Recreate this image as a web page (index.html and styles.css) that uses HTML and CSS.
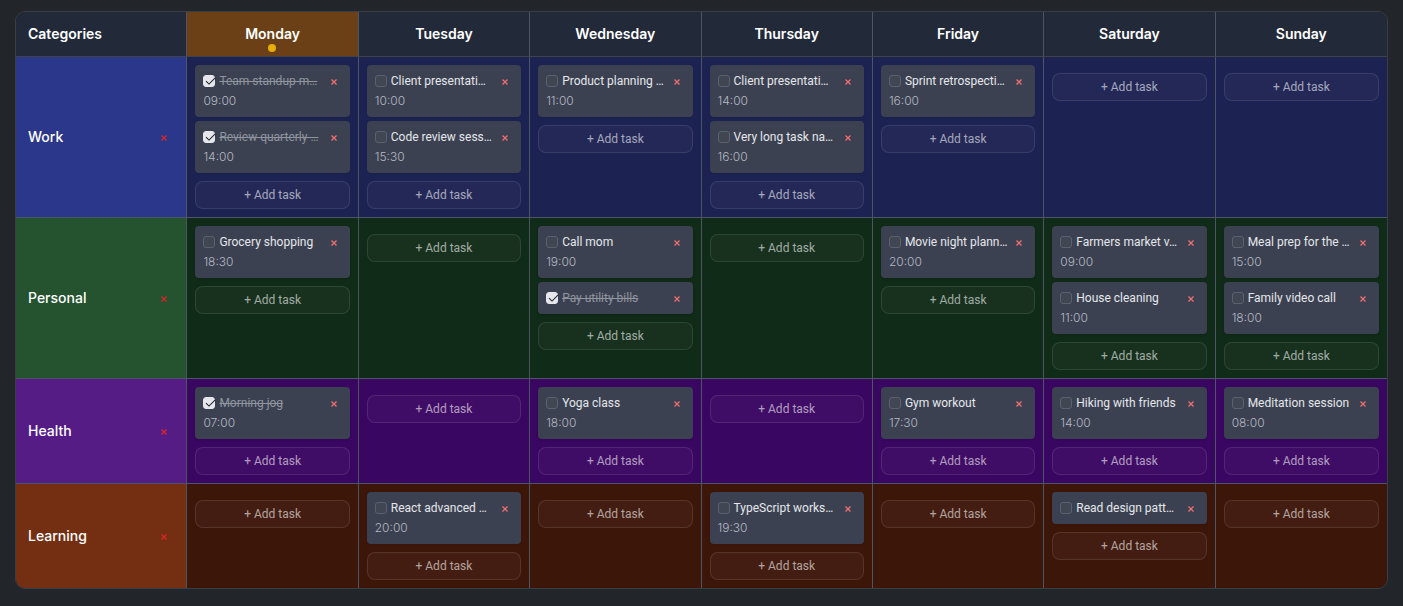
FILE: index.html
```html
<!DOCTYPE html>
<html lang="en">
<head>
<meta charset="utf-8">
<meta name="viewport" content="width=device-width, initial-scale=1">
<title>Weekly planner</title>
<link rel="stylesheet" href="styles.css">
</head>
<body>
<main class="planner">
  <table class="week">
    <thead>
      <tr id="week-head"><th class="head head-categories" scope="col">Categories</th></tr>
    </thead>
    <tbody id="week-body"></tbody>
  </table>
</main>
<script src="planner.js"></script>
</body>
</html>
```

FILE: styles.css
```css
* {
  box-sizing: border-box;
}

body {
  margin: 0;
  background: #222529;
  color: #ffffff;
  font-family: Inter, "Liberation Sans", sans-serif;
  font-size: 14px;
  line-height: 20px;
}

.planner {
  margin: 11px 15px;
  border: 1px solid #3a3f45;
  border-radius: 10px;
  overflow: hidden;
}

.week {
  width: 100%;
  table-layout: fixed;
  border-collapse: separate;
  border-spacing: 0;
}

.head,
.category,
.day {
  border-right: 1px solid #4b5563;
  border-bottom: 1px solid #4b5563;
}

.head:last-child,
.day:last-child {
  border-right: 0;
}

tbody tr:last-child > * {
  border-bottom: 0;
}

.head {
  position: relative;
  padding: 12px;
  background: #222938;
  border-bottom-color: #3c4448;
  font-weight: 600;
  text-align: center;
}

.head-categories {
  text-align: left;
}

.head-today {
  background: #6b4016;
}

.today-dot {
  position: absolute;
  bottom: 4px;
  left: 50%;
  width: 8px;
  height: 8px;
  margin-left: -5px;
  border-radius: 50%;
  background: #e7b008;
}

.category {
  padding: 0 12px;
  font-weight: 500;
  text-align: left;
  vertical-align: middle;
}

.category-row {
  display: flex;
  align-items: center;
  justify-content: space-between;
}

.day {
  padding: 8px;
  vertical-align: top;
}

.work .category { background: #2a378a; }
.work .day { background: #1c2252; }
.personal .category { background: #25532f; }
.personal .day { background: #102b17; }
.health .category { background: #551c86; }
.health .day { background: #390661; }
.learning .category { background: #742f13; }
.learning .day { background: #3d160a; }

.tasks {
  display: grid;
  grid-template-columns: minmax(0, 1fr);
  gap: 4px;
  margin: 0;
  padding: 0;
  list-style: none;
}

.task {
  padding: 8px;
  border-radius: 4px;
  background: #3b4151;
  box-shadow: 0 1px 2px rgba(0, 0, 0, 0.1);
  font-family: Roboto, "Liberation Sans", sans-serif;
  font-size: 12px;
  line-height: 16px;
}

.task-row {
  display: flex;
  align-items: center;
}

.check {
  flex: none;
  appearance: none;
  width: 12px;
  height: 12px;
  margin: 0 4px 0 0;
  border: 1px solid #5b616e;
  border-radius: 3px;
  background: #414752;
}

.check:checked {
  border-color: #e5e7eb;
  background: #e5e7eb;
}

.check-wrap {
  position: relative;
  display: flex;
}

.tick {
  position: absolute;
  top: 0;
  left: 0;
  width: 14px;
  height: 12px;
  pointer-events: none;
}

.title {
  flex: 1;
  min-width: 0;
  color: #e5e7eb;
  white-space: nowrap;
}

.done .title {
  color: #8f949e;
  text-decoration: line-through;
}

.time {
  display: block;
  margin-top: 4px;
  color: #b4b8c1;
  font-family: Inter, "Liberation Sans", sans-serif;
  font-weight: 300;
}

.remove {
  display: flex;
  flex: none;
  align-items: center;
  justify-content: center;
  width: 16px;
  height: 16px;
  padding: 2px 0 0;
  border: 0;
  background: none;
  color: #ef6f70;
}

.category .remove {
  width: 20px;
  color: #d92626;
}

.cross {
  width: 6px;
  height: 6px;
}

.add {
  display: block;
  width: 100%;
  height: 28px;
  margin-top: 8px;
  padding: 0;
  border: 1px solid rgba(255, 255, 255, 0.1);
  border-radius: 8px;
  background: rgba(255, 255, 255, 0.03);
  color: rgba(255, 255, 255, 0.6);
  font: 400 12px/16px Roboto, "Liberation Sans", sans-serif;
}
```

FILE: planner.js
```js
const days = ['Monday', 'Tuesday', 'Wednesday', 'Thursday', 'Friday', 'Saturday', 'Sunday'];
const today = 'Monday';

// Each task: [title, time, done]
const categories = [
  { name: 'Work', tasks: {
    Monday: [['Team standup m…', '09:00', true], ['Review quarterly …', '14:00', true]],
    Tuesday: [['Client presentati…', '10:00'], ['Code review sess…', '15:30']],
    Wednesday: [['Product planning …', '11:00']],
    Thursday: [['Client presentati…', '14:00'], ['Very long task na…', '16:00']],
    Friday: [['Sprint retrospecti…', '16:00']],
  } },
  { name: 'Personal', tasks: {
    Monday: [['Grocery shopping', '18:30']],
    Wednesday: [['Call mom', '19:00'], ['Pay utility bills', '', true]],
    Friday: [['Movie night plann…', '20:00']],
    Saturday: [['Farmers market v…', '09:00'], ['House cleaning', '11:00']],
    Sunday: [['Meal prep for the …', '15:00'], ['Family video call', '18:00']],
  } },
  { name: 'Health', tasks: {
    Monday: [['Morning jog', '07:00', true]],
    Wednesday: [['Yoga class', '18:00']],
    Friday: [['Gym workout', '17:30']],
    Saturday: [['Hiking with friends', '14:00']],
    Sunday: [['Meditation session', '08:00']],
  } },
  { name: 'Learning', tasks: {
    Tuesday: [['React advanced …', '20:00']],
    Thursday: [['TypeScript works…', '19:30']],
    Saturday: [['Read design patt…', '']],
  } },
];

const removeButton = (label) => `
  <button class="remove" type="button" aria-label="Delete ${label}">
    <svg class="cross" viewBox="0 0 6 6" aria-hidden="true"><path d="M.5.5 5.5 5.5M5.5.5.5 5.5" fill="none" stroke="currentColor" stroke-width="1.3"/></svg>
  </button>`;

const tick = '<svg class="tick" viewBox="0 0 14 12" aria-hidden="true"><path d="M3 6.2 6 9.1 12.2 2.8" fill="none" stroke="#25282e" stroke-width="1.1"/></svg>';

let nextId = 0;

const taskItem = ([title, time, done]) => {
  const id = `task-${nextId++}`;
  return `<li class="task${done ? ' done' : ''}">
    <div class="task-row">
      <span class="check-wrap"><input class="check" type="checkbox" id="${id}"${done ? ' checked' : ''}>${done ? tick : ''}</span>
      <label class="title" for="${id}">${title}</label>
      ${removeButton(title)}
    </div>
    ${time ? `<time class="time">${time}</time>` : ''}
  </li>`;
};

const dayCell = (tasks = []) => `<td class="day">
  <ul class="tasks">${tasks.map(taskItem).join('')}</ul>
  <button class="add" type="button">+ Add task</button>
</td>`;

document.getElementById('week-head').insertAdjacentHTML('beforeend', days.map((day) =>
  day === today
    ? `<th class="head head-today" scope="col">${day}<span class="today-dot"></span></th>`
    : `<th class="head" scope="col">${day}</th>`).join(''));

document.getElementById('week-body').innerHTML = categories.map(({ name, tasks }) => `
  <tr class="${name.toLowerCase()}">
    <th class="category" scope="row"><div class="category-row">${name}${removeButton(name)}</div></th>
    ${days.map((day) => dayCell(tasks[day])).join('')}
  </tr>`).join('');
```
